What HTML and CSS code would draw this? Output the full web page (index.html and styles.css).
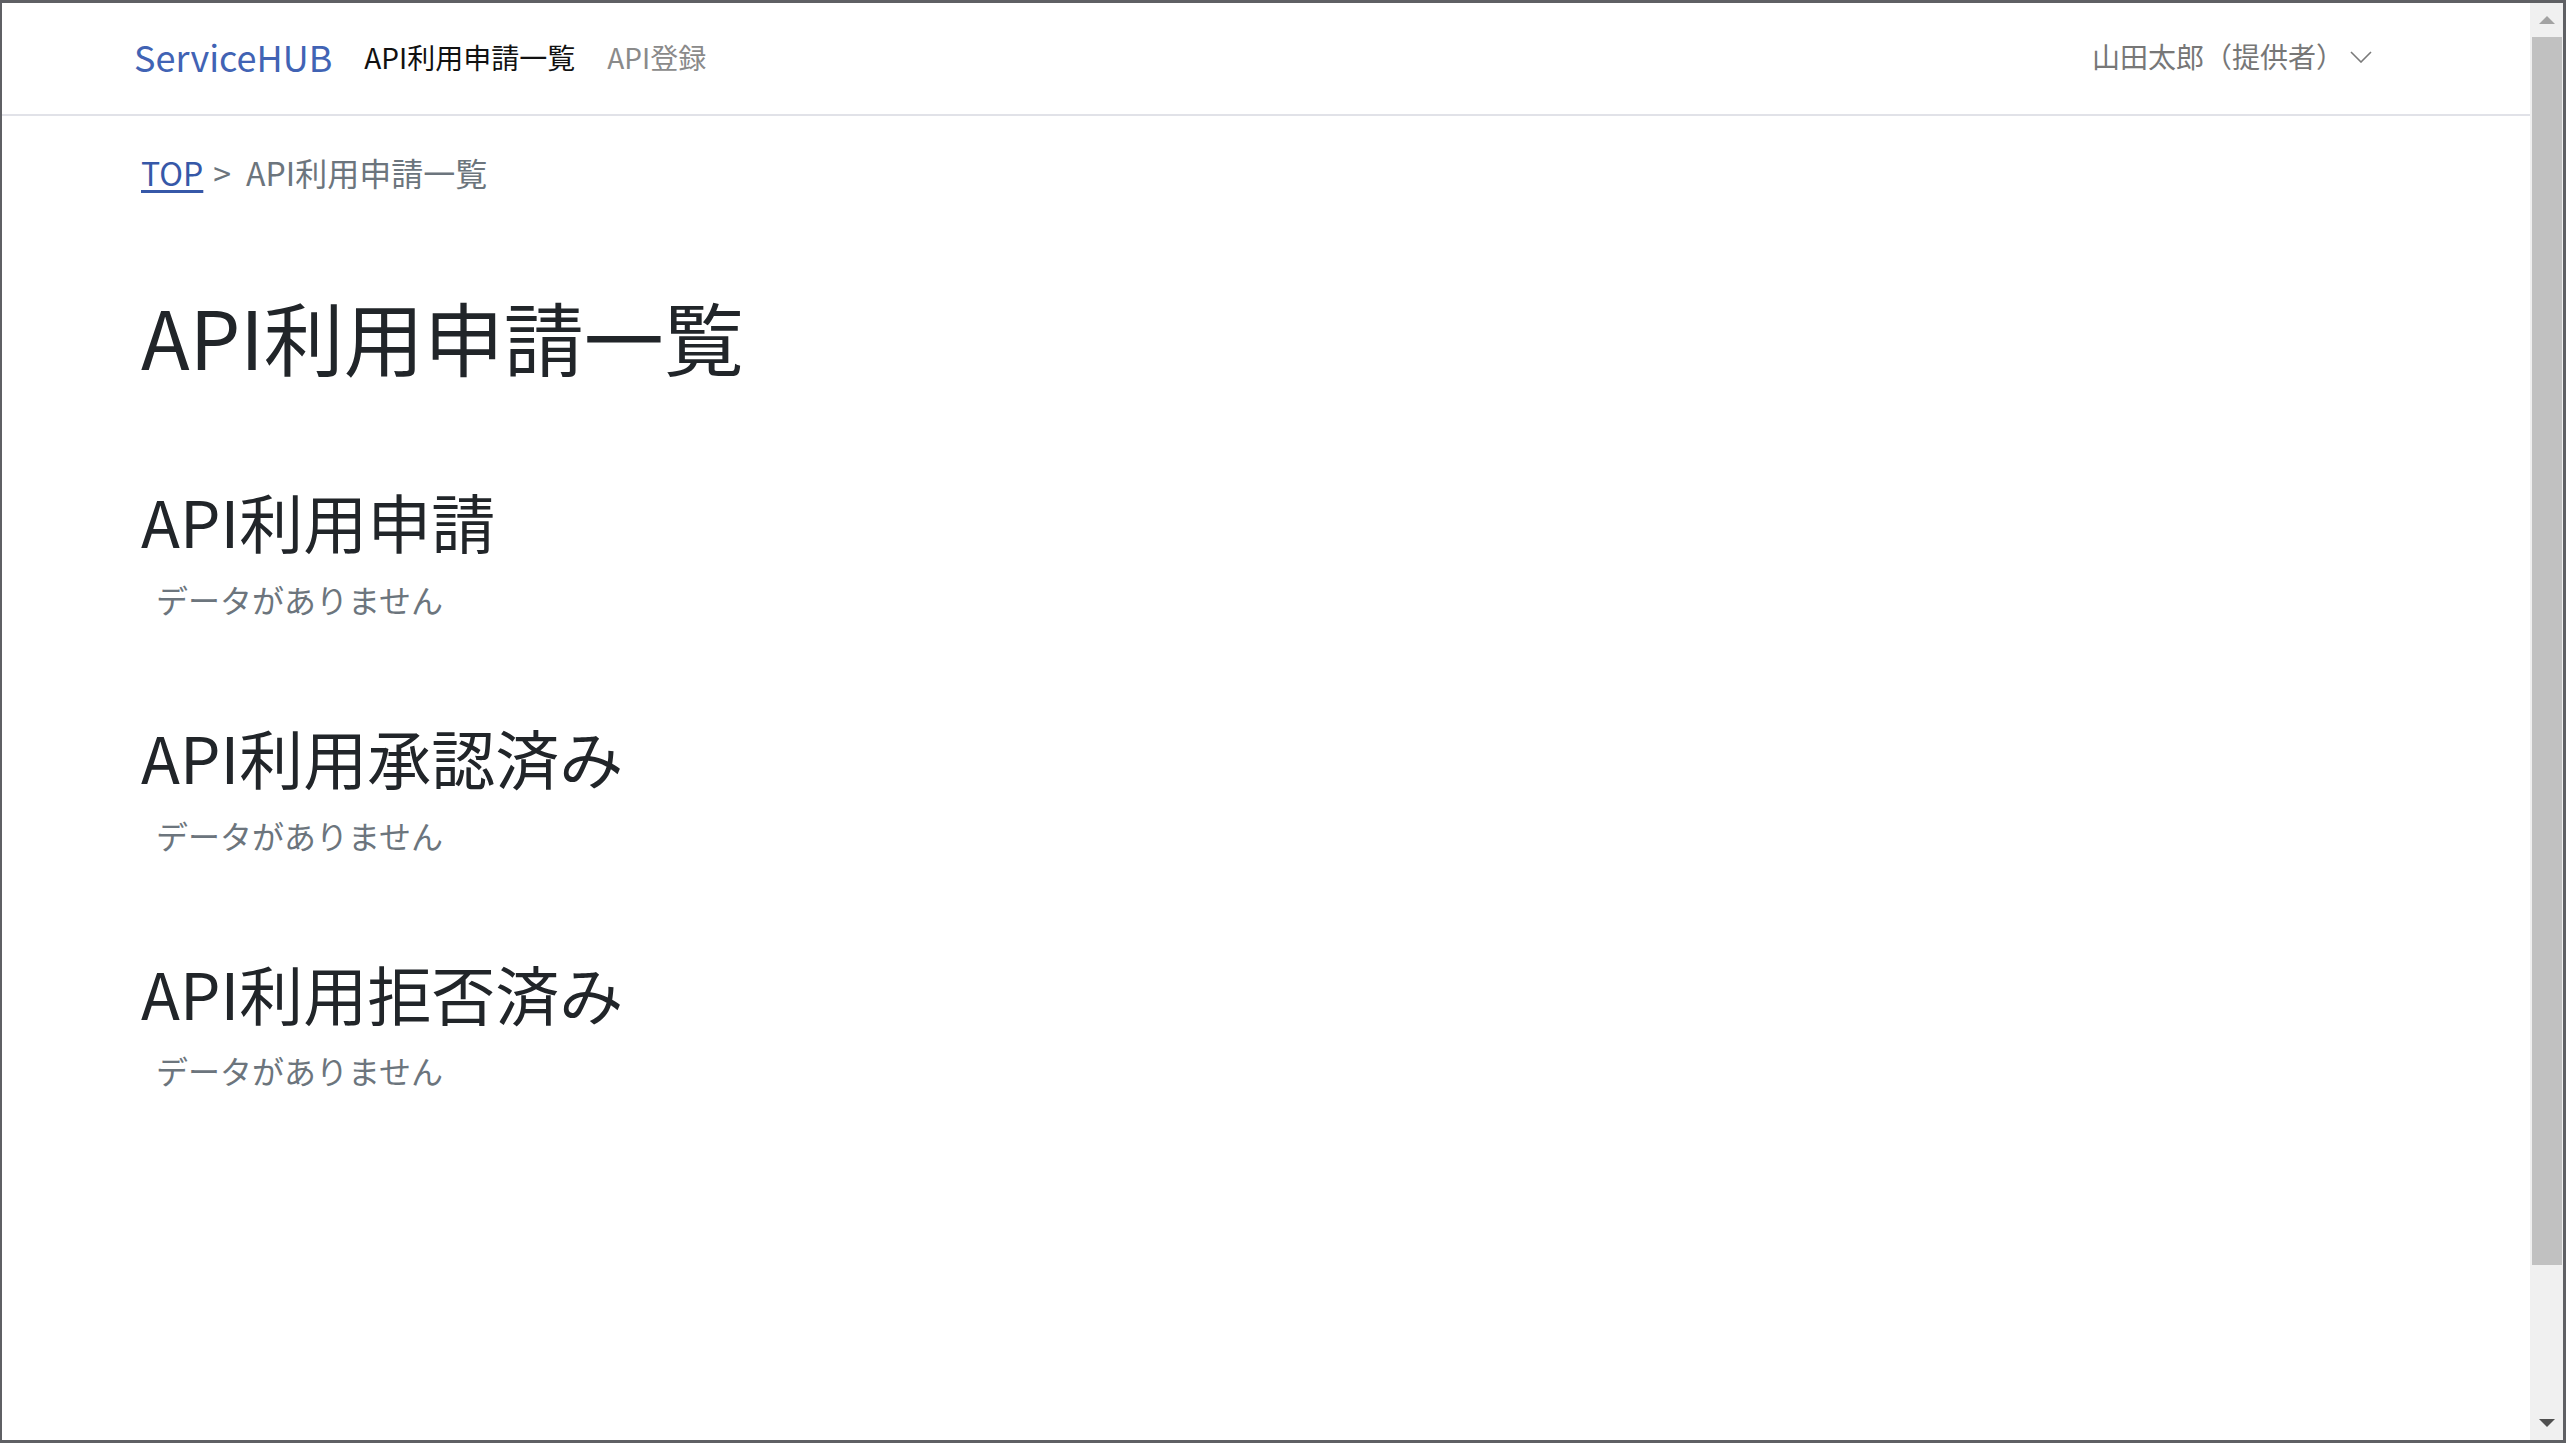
FILE: index.html
```html
<!DOCTYPE html>
<html lang="ja">
<head>
    <meta charset="UTF-8">
    <meta name="viewport" content="width=device-width, initial-scale=1.0">
    <title>API利用申請一覧 | ServiceHUB</title>
    <link rel="stylesheet" href="styles.css">
</head>
<body>
    <div class="page">
        <header class="navbar">
            <a class="brand" href="#">ServiceHUB</a>
            <nav class="nav">
                <a class="nav-link active" href="#">API利用申請一覧</a>
                <a class="nav-link" href="#">API登録</a>
            </nav>
            <div class="user-menu">
                <span>山田太郎（提供者）</span>
                <svg class="chevron" width="22" height="12" viewBox="0 0 22 12">
                    <polyline points="1,1 11,11 21,1" fill="none" stroke="#7a7a7a" stroke-width="1.6"/>
                </svg>
            </div>
        </header>

        <main class="content">
            <ol class="breadcrumb">
                <li><a href="#">TOP</a></li>
                <li class="sep">&gt;</li>
                <li class="current">API利用申請一覧</li>
            </ol>

            <h1>API利用申請一覧</h1>

            <section class="list-section">
                <h2>API利用申請</h2>
                <p class="empty">データがありません</p>
            </section>

            <section class="list-section">
                <h2>API利用承認済み</h2>
                <p class="empty">データがありません</p>
            </section>

            <section class="list-section">
                <h2>API利用拒否済み</h2>
                <p class="empty">データがありません</p>
            </section>
        </main>
    </div>

    <!-- window scrollbar as seen in the capture -->
    <div class="scrollbar">
        <div class="sb-btn"><span class="arrow-up"></span></div>
        <div class="sb-thumb"></div>
        <div class="sb-track"></div>
        <div class="sb-btn"><span class="arrow-down"></span></div>
    </div>
</body>
</html>
```

FILE: styles.css
```css
* {
    margin: 0;
    padding: 0;
    box-sizing: border-box;
}

html, body {
    height: 100%;
}

body {
    font-family: "Noto Sans CJK JP", "Noto Sans", sans-serif;
    color: #212529;
    background: #fff;
    border: 3px solid #5f6064;
    border-left-width: 2px;
    display: flex;
    overflow: hidden;
}

a {
    text-decoration: none;
}

.page {
    flex: 1;
    min-width: 0;
    background: #fff;
}

/* header */
.navbar {
    height: 113px;
    border-bottom: 2px solid #e1e2e8;
    display: flex;
    align-items: center;
    padding: 0 158px 3px 132px;
}

.brand {
    font-size: 36px;
    line-height: 1.2;
    color: #4163b4;
    margin-right: 16px;
}

.nav {
    display: flex;
    flex: 1;
}

.nav-link {
    font-size: 28px;
    line-height: 1.5;
    padding: 0 16px;
    color: #8a8a8a;
}

.nav-link.active {
    color: #111;
}

.user-menu {
    display: flex;
    align-items: center;
    gap: 6px;
    font-size: 28px;
    line-height: 1.5;
    color: #777;
    margin-bottom: 3px;
}

.chevron {
    display: block;
    margin-top: 2px;
}

/* main */
.content {
    padding: 32px 0 0 139px;
}

.breadcrumb {
    list-style: none;
    display: flex;
    font-size: 32px;
    line-height: 1.5;
    color: #6c757d;
}

.breadcrumb a {
    color: #3658a8;
    text-decoration: underline;
    text-underline-offset: 4px;
}

.breadcrumb .sep {
    padding: 0 15px 0 10px;
}

h1 {
    font-size: 80px;
    font-weight: 400;
    line-height: 1.2;
    margin-top: 91px;
}

.list-section {
    margin-top: 99px;
}

.list-section + .list-section {
    margin-top: 95px;
}

h2 {
    font-size: 64px;
    font-weight: 400;
    line-height: 1.2;
    margin-bottom: 16px;
}

.empty {
    font-size: 32px;
    line-height: 1.5;
    color: #6c757d;
    padding-left: 15px;
}

/* scrollbar */
.scrollbar {
    width: 33px;
    background: #f0f0f0;
    display: flex;
    flex-direction: column;
}

.sb-btn {
    height: 34px;
    display: flex;
    align-items: center;
    justify-content: center;
}

.sb-thumb {
    height: 1228px;
    margin: 0 1px 0 2px;
    background: #c1c1c1;
}

.sb-track {
    flex: 1;
}

.arrow-up {
    border-left: 8px solid transparent;
    border-right: 8px solid transparent;
    border-bottom: 8px solid #a3a3a3;
}

.arrow-down {
    border-left: 8px solid transparent;
    border-right: 8px solid transparent;
    border-top: 8px solid #505050;
}
```
